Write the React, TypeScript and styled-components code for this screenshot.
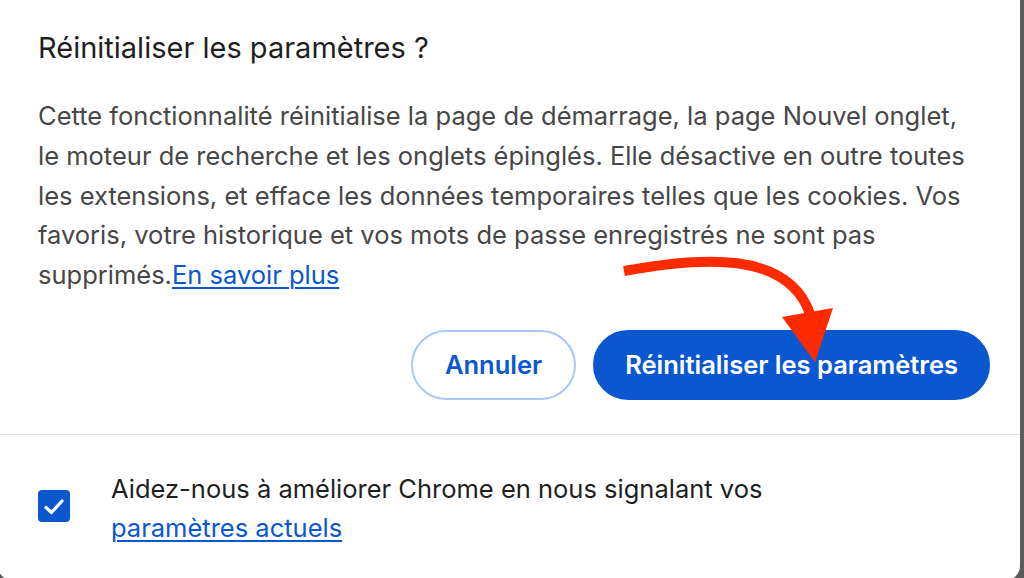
import React, { useState } from 'react';
import styled, { createGlobalStyle } from 'styled-components';

const color = {
  backdrop: '#5b5b5b',
  white: '#ffffff',
  title: '#1f1f1f',
  body: '#474747',
  blue: '#0b57d0',
  lightBlue: '#a8c7fa',
  divider: '#e0e0e0',
  red: '#ff2a00',
};

const GlobalStyle = createGlobalStyle`
  html, body {
    margin: 0;
    padding: 0;
    height: 100%;
    overflow: hidden;
    background-color: ${color.backdrop};
  }
  body {
    font-family: Inter, 'Noto Sans', 'Liberation Sans', sans-serif;
  }
`;

const Dialog = styled.div`
  position: relative;
  box-sizing: border-box;
  width: 1022px;
  height: 592px;
  margin-top: -12px;
  margin-left: -2px;
  border-radius: 14px;
  background-color: ${color.white};
  display: flex;
  flex-direction: column;
`;

const Main = styled.div`
  display: flex;
  flex-direction: column;
  padding: 44px 30px 34px 40px;
`;

const Title = styled.h1`
  margin: 0;
  font-size: 29px;
  line-height: 32px;
  font-weight: 400;
  color: ${color.title};
`;

const Body = styled.p`
  margin: 32px 0 0;
  font-size: 25.5px;
  line-height: 39.8px;
  color: ${color.body};
  white-space: nowrap;
`;

const Link = styled.a`
  color: ${color.blue};
  text-decoration: underline;
  text-decoration-thickness: 1.5px;
  text-underline-offset: 3px;
  cursor: pointer;
`;

const Actions = styled.div`
  display: flex;
  justify-content: flex-end;
  gap: 17px;
  margin-top: 35px;
`;

type ButtonProps = {
  $primary?: boolean;
};

const Button = styled.button<ButtonProps>`
  box-sizing: border-box;
  height: 70px;
  padding: 0 ${(props) => (props.$primary ? '30px' : '32px')};
  border-radius: 35px;
  font-family: inherit;
  font-size: 25.5px;
  font-weight: 600;
  cursor: pointer;
  border: 2px solid ${(props) => (props.$primary ? color.blue : color.lightBlue)};
  background-color: ${(props) => (props.$primary ? color.blue : color.white)};
  color: ${(props) => (props.$primary ? color.white : color.blue)};
`;

const Divider = styled.hr`
  margin: 0;
  border: none;
  border-top: 1px solid ${color.divider};
`;

const Footer = styled.label`
  display: flex;
  align-items: center;
  gap: 41px;
  padding: 34px 40px 0;
  cursor: pointer;
`;

const Checkbox = styled.span<{ $checked: boolean }>`
  flex: none;
  display: flex;
  width: 32px;
  height: 32px;
  margin-top: -3px;
  border-radius: 4px;
  box-sizing: border-box;
  background-color: ${(props) => (props.$checked ? color.blue : color.white)};
  border: ${(props) => (props.$checked ? 'none' : `2px solid ${color.blue}`)};
`;

const FooterText = styled.span`
  font-size: 25.5px;
  line-height: 39px;
  color: ${color.title};
`;

const Annotation = styled.svg`
  position: absolute;
  left: 0;
  top: 0;
  pointer-events: none;
`;

const App: React.FC = () => {
  const [checked, setChecked] = useState(true);

  return (
    <>
      <GlobalStyle />
      <Dialog>
        <Main>
          <Title>Réinitialiser les paramètres ?</Title>
          <Body>
            Cette fonctionnalité réinitialise la page de démarrage, la page Nouvel onglet,
            <br />
            le moteur de recherche et les onglets épinglés. Elle désactive en outre toutes
            <br />
            les extensions, et efface les données temporaires telles que les cookies. Vos
            <br />
            favoris, votre historique et vos mots de passe enregistrés ne sont pas
            <br />
            supprimés.<Link>En savoir plus</Link>
          </Body>
          <Actions>
            <Button>Annuler</Button>
            <Button $primary>Réinitialiser les paramètres</Button>
          </Actions>
        </Main>
        <Divider />
        <Footer onClick={() => setChecked((prev) => !prev)}>
          <Checkbox $checked={checked}>
            {checked && (
              <svg width="32" height="32" viewBox="0 0 32 32">
                <path
                  d="M8 17.5 L13.5 22.5 L24 11"
                  fill="none"
                  stroke={color.white}
                  strokeWidth="3.2"
                  strokeLinecap="round"
                  strokeLinejoin="round"
                />
              </svg>
            )}
          </Checkbox>
          <FooterText>
            Aidez-nous à améliorer Chrome en nous signalant vos
            <br />
            <Link>paramètres actuels</Link>
          </FooterText>
        </Footer>
        <Annotation width="1022" height="592" viewBox="-2 -12 1022 592">
          <path
            d="M624 271 C 700 257, 788 250, 810 314"
            fill="none"
            stroke={color.red}
            strokeWidth="10"
          />
          <polygon points="782,317 833,308 815,362" fill={color.red} />
        </Annotation>
      </Dialog>
    </>
  );
};

export default App;
